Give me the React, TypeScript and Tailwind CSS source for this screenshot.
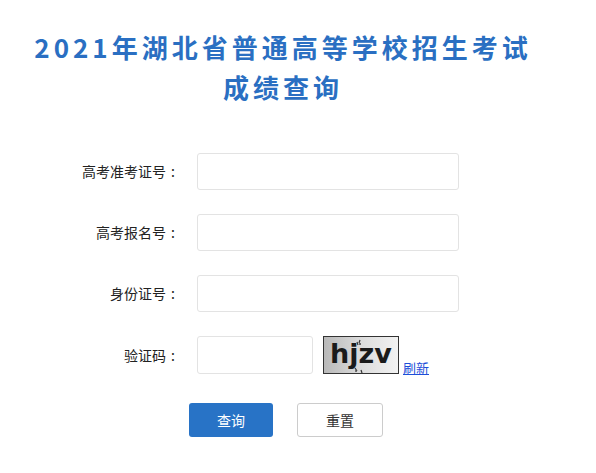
import React from 'react';

const cjk = "font-['Noto_Sans_CJK_SC',sans-serif]";

function Field({ label, children }: { label: string; children: React.ReactNode }) {
  return (
    <div className="flex items-center">
      <label className={`w-[180px] shrink-0 flex justify-end text-[14px] text-[#222] ${cjk}`}>
        {label}
        <span className="w-[14px] text-center">:</span>
      </label>
      <div className="ml-[17px] flex items-end">{children}</div>
    </div>
  );
}

function Captcha() {
  return (
    <div className="relative w-[76px] h-[38px] border border-[#333] bg-gradient-to-r from-[#b9b9b9] via-[#dcdcdc] to-[#f2f2f2] flex items-center justify-center overflow-hidden">
      <span className="font-['DejaVu_Sans',sans-serif] font-bold text-[27px] leading-none text-[#1a1a1a] -mt-[3px]">
        hjzv
      </span>
      <svg className="absolute inset-0" width="76" height="38" viewBox="0 0 76 38">
        <path d="M33 5l1 3M36 3l-1 3M31 31l2 3M37 33l1 3" stroke="#333" strokeWidth="1.2" />
        <circle cx="36" cy="7" r="1" fill="#444" />
        <circle cx="32" cy="34" r="1" fill="#555" />
      </svg>
    </div>
  );
}

export default function App() {
  return (
    <div className="min-h-[473px] bg-white">
      {/* ── TITLE ── */}
      <div className={`pt-[27px] pr-[30px] text-center text-[26px] leading-[40px] font-bold tracking-[4px] text-[#2a6fc2] ${cjk}`}>
        <h1>2021年湖北省普通高等学校招生考试</h1>
        <h1>成绩查询</h1>
      </div>

      {/* ── FORM ── */}
      <form className="mt-[46px] flex flex-col gap-[24px]">
        <Field label="高考准考证号">
          <input className="w-[262px] h-[37px] border border-[#e3e3e3] rounded-[3px] outline-none" />
        </Field>
        <Field label="高考报名号">
          <input className="w-[262px] h-[37px] border border-[#e3e3e3] rounded-[3px] outline-none" />
        </Field>
        <Field label="身份证号">
          <input className="w-[262px] h-[37px] border border-[#e3e3e3] rounded-[3px] outline-none" />
        </Field>
        <Field label="验证码">
          <input className="w-[116px] h-[38px] border border-[#e3e3e3] rounded-[3px] outline-none" />
          <div className="ml-[10px]">
            <Captcha />
          </div>
          <a href="#" className={`ml-[4px] -mb-[2px] text-[13px] leading-[16px] text-[#1d4fd8] underline ${cjk}`}>刷新</a>
        </Field>

        <div className="flex pl-[189px] gap-[24px] mt-[5px]">
          <button type="button" className={`w-[84px] h-[34px] rounded-[3px] bg-[#2873c6] text-white text-[14px] ${cjk}`}>查询</button>
          <button type="button" className={`w-[86px] h-[34px] rounded-[3px] border border-[#cccccc] bg-white text-[#333] text-[14px] ${cjk}`}>重置</button>
        </div>
      </form>
    </div>
  );
}
